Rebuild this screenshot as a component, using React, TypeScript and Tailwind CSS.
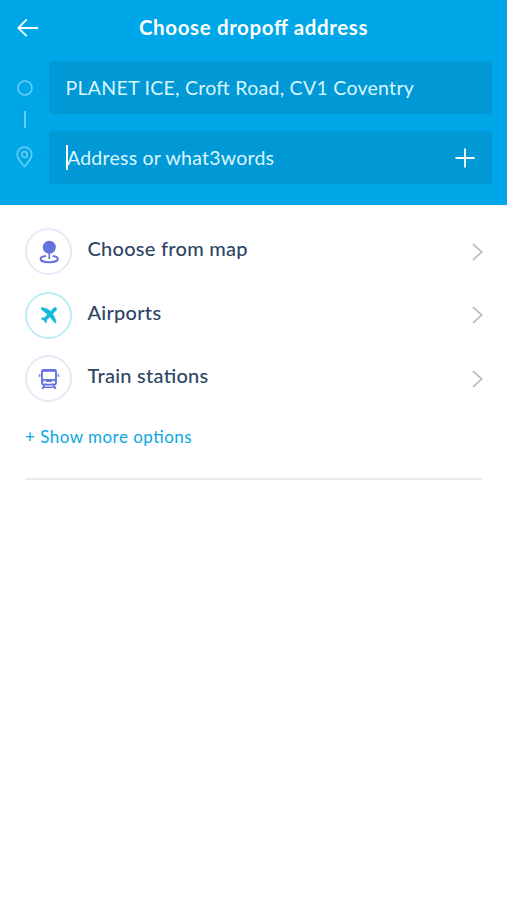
import { useState } from 'react';
import type { ReactNode } from 'react';

interface OptionRowProps {
  label: string;
  borderClass: string;
  icon: ReactNode;
}

function BackIcon() {
  return (
    <svg width="22" height="20" viewBox="0 0 22 20" fill="none" stroke="currentColor" strokeWidth="1.8">
      <path d="M1.200 10H21M9.800 1.400L1.200 10l8.600 8.200" />
    </svg>
  );
}

function MapIcon() {
  return (
    <svg width="20" height="24" viewBox="0 0 20 24" fill="none">
      <circle cx="10.300" cy="7.200" r="6.500" fill="#6574dc" />
      <path d="M10.300 12v7" stroke="#6574dc" strokeWidth="1.7" />
      <path
        d="M7 15.900C3.600 16.300 1.600 17.400 1.600 18.900C1.600 20.800 5.400 22.200 10.200 22.200S18.800 20.800 18.800 18.900C18.800 17.400 17 16.300 13.600 15.900"
        stroke="#6574dc"
        strokeWidth="2"
      />
    </svg>
  );
}

function PlaneIcon() {
  return (
    <svg width="18" height="18" viewBox="0 0 18 18" fill="#16b9de" stroke="#16b9de" strokeWidth=".5">
      <path d="M14.300 1.600C15.600 .9 17.200 2.300 16.500 3.700C16.100 4.500 15 5.500 13.200 7.300L12.700 7.900L14.900 11.900L16.200 16.400L15.300 17.200L9.800 11L6.700 13.800L6.700 16.100L5.600 17L4.200 14.400L1.200 13L2.100 11.800L4.500 11.700L7.500 8.500L1.200 3.200L1.600 1.300L7.500 3.100L10.700 5.200L12 3.900C13.200 2.700 13.700 2 14.300 1.600Z" />
    </svg>
  );
}

function TrainIcon() {
  return (
    <svg width="22" height="22" viewBox="0 0 22 22" fill="none" stroke="#6574dc">
      <path d="M5.500 2H16.500Q18 2 18 3.500V15Q18 16.500 16.500 16.500H5.500Q4 16.500 4 15V3.500Q4 2 5.500 2Z" strokeWidth="1.900" />
      <path d="M4 3H18" strokeWidth="1.600" />
      <path d="M4 12.500H18" strokeWidth="3" />
      <path d="M5.500 13.500H8M14 13.500H16.500" stroke="white" strokeWidth="1.600" />
      <path d="M9.500 15H12.500" stroke="white" strokeWidth="1" />
      <path d="M6.300 16.500L4.500 21M15.700 16.500L17.500 21" strokeWidth="1.800" />
      <path d="M5.500 19.300H16.500" strokeWidth="1.500" />
      <path d="M1.500 6.200V9M20.500 6.200V9" strokeWidth="1.500" opacity=".8" />
      <path d="M1.500 6.900H3.500M18.500 6.900H20.500" strokeWidth="1" opacity=".5" />
    </svg>
  );
}

function OptionRow({ label, borderClass, icon }: OptionRowProps) {
  return (
    <button type="button" className="flex h-[63.5px] w-full items-center text-left">
      <span className={`flex size-[47px] shrink-0 items-center justify-center rounded-full border-2 ${borderClass}`}>
        {icon}
      </span>
      <span className="ml-[15.5px] -mt-[7.5px] grow text-[20px] leading-6 font-medium tracking-[0.27px] text-[#2e4565]">
        {label}
      </span>
      <svg className="-mr-px" width="11" height="18" viewBox="0 0 11 18" fill="none" stroke="#b9bfc5" strokeWidth="1.700">
        <path d="M1 1l8.800 8L1 17" />
      </svg>
    </button>
  );
}

export default function App() {
  const [address, setAddress] = useState('');

  const options = [
    { label: 'Choose from map', borderClass: 'border-[#e8e8fa]', icon: <MapIcon /> },
    { label: 'Airports', borderClass: 'border-[#bcecf4]', icon: <PlaneIcon /> },
    { label: 'Train stations', borderClass: 'border-[#e8e8fa]', icon: <TrainIcon /> }
  ];

  return (
    <div className="min-h-screen bg-white font-['Lato',Carlito,sans-serif] [font-feature-settings:'liga'_1]">
      <header className="h-[205px] bg-[#00a7e8] text-white">
        <div className="grid h-[61px] grid-cols-[60px_1fr_60px] pt-[15px]">
          <button type="button" aria-label="Back" className="h-[26px] pl-[17px]">
            <BackIcon />
          </button>
          <h1 className="text-center text-[20.5px] leading-6 font-bold tracking-[0.62px]">Choose dropoff address</h1>
        </div>

        <div className="flex pr-[15px]">
          <div className="flex w-[49px] shrink-0 flex-col items-center text-[#66ccf3]">
            <svg className="mt-[19px]" width="16" height="16" viewBox="0 0 16 16" fill="none" stroke="currentColor" strokeWidth="1.700">
              <circle cx="8" cy="8" r="7" />
            </svg>
            <div className="mt-[15px] h-[17px] w-[2px] bg-[#66ccf3]" />
            <svg className="mt-[18px]" width="17" height="22" viewBox="0 0 17 22" fill="none" stroke="currentColor" strokeWidth="1.700">
              <path d="M8.500 20.500C6 17.500 1.200 12.800 1.200 8.400A7.300 7.300 0 0 1 15.800 8.400C15.800 12.800 11 17.500 8.500 20.500Z" />
              <circle cx="8.500" cy="8.500" r="2.800" />
            </svg>
          </div>

          <div className="flex grow flex-col gap-[17px]">
            <div className="flex h-[53px] items-center rounded-[4px] bg-[#0099d6] px-[16.5px] pt-px text-[19.5px] tracking-[0.28px] text-[#d9f5ff]">
              PLANET ICE, Croft Road, CV1 Coventry
            </div>
            <div className="flex h-[53px] items-center rounded-[4px] bg-[#0099d6] pr-[17px] pl-[17px]">
              <span className="-mr-[2px] h-[25px] w-[2px] bg-white" />
              <input
                value={address}
                onChange={(e) => setAddress(e.target.value)}
                placeholder="Address or what3words"
                className="min-w-0 grow bg-transparent pl-px text-[19.5px] tracking-[0.23px] text-white outline-none placeholder:text-[#d9f5ff]"
              />
              <button type="button" aria-label="Add stop">
                <svg width="20" height="20" viewBox="0 0 20 20" fill="none" stroke="currentColor" strokeWidth="1.800">
                  <path d="M10 .5v19M.5 10h19" />
                </svg>
              </button>
            </div>
          </div>
        </div>
      </header>

      <main className="px-[25px] pt-[15px]">
        {options.map((option) => (
          <OptionRow key={option.label} {...option} />
        ))}
        <button type="button" className="mt-[14px] block text-[17px] leading-6 tracking-[0.48px] text-[#08a6e2]">
          + Show more options
        </button>
        <div className="mt-[29px] h-[2px] bg-[#ebebed]" />
      </main>
    </div>
  );
}
